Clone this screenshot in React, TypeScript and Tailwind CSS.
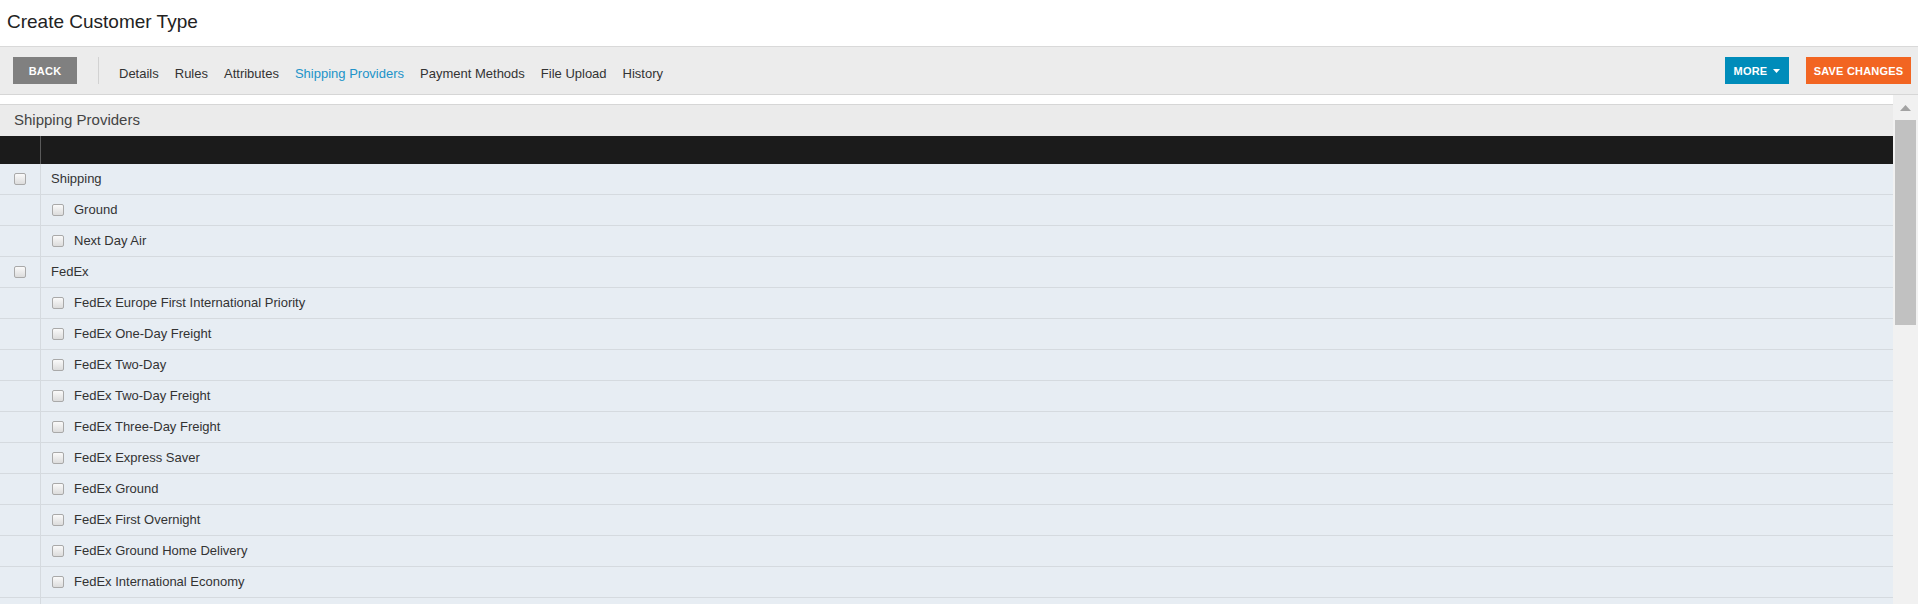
import { ReactNode } from 'react';

type Row = { label: string; child?: boolean };

const rows: Row[] = [
  { label: 'Shipping' },
  { label: 'Ground', child: true },
  { label: 'Next Day Air', child: true },
  { label: 'FedEx' },
  { label: 'FedEx Europe First International Priority', child: true },
  { label: 'FedEx One-Day Freight', child: true },
  { label: 'FedEx Two-Day', child: true },
  { label: 'FedEx Two-Day Freight', child: true },
  { label: 'FedEx Three-Day Freight', child: true },
  { label: 'FedEx Express Saver', child: true },
  { label: 'FedEx Ground', child: true },
  { label: 'FedEx First Overnight', child: true },
  { label: 'FedEx Ground Home Delivery', child: true },
  { label: 'FedEx International Economy', child: true },
];

const tabs = ['Details', 'Rules', 'Attributes', 'Shipping Providers', 'Payment Methods', 'File Upload', 'History'];

function Checkbox() {
  return (
    <span className="block w-[12px] h-[12px] rounded-[2px] border border-[#a9a9a9] bg-gradient-to-b from-[#fafafa] to-[#dcdcdc]" />
  );
}

function Btn({ children, className }: { children: ReactNode; className: string }) {
  return (
    <button
      className={`h-[27px] flex items-center justify-center pt-px text-[11px] font-bold text-white tracking-[0.2px] ${className}`}
    >
      {children}
    </button>
  );
}

export default function App() {
  return (
    <div className="h-[604px] w-full flex flex-col overflow-hidden bg-white text-[#333] font-['Liberation_Sans',Arial,sans-serif]">
      <div className="h-[47px] shrink-0 flex items-center pl-[7px] border-b border-[#d9d9d9]">
        <h1 className="text-[19px] text-[#222] -mt-px">Create Customer Type</h1>
      </div>

      <div className="h-[48px] shrink-0 flex items-center bg-[#ececec] border-b border-[#d6d6d6] pl-[13px] pr-[7px]">
        <Btn className="w-[64px] bg-[#808080]">BACK</Btn>
        <span className="w-px h-[27px] bg-[#d2d2d2] ml-[21px] mr-[20px]" />
        <nav className="flex items-center gap-[16px] text-[13px] mt-[6px]">
          {tabs.map((t) => (
            <span key={t} className={t === 'Shipping Providers' ? 'text-[#2193c9]' : 'text-[#333]'}>
              {t}
            </span>
          ))}
        </nav>
        <div className="ml-auto flex items-center gap-[17px]">
          <Btn className="w-[64px] bg-[#008cba] gap-[6px]">
            MORE
            <svg width="7" height="4" viewBox="0 0 7 4">
              <path d="M0 0h7L3.5 4z" fill="#fff" />
            </svg>
          </Btn>
          <Btn className="w-[105px] bg-[#f26522]">SAVE CHANGES</Btn>
        </div>
      </div>

      <div className="flex-1 flex min-h-0">
        <div className="flex-1 flex flex-col pt-[9px] min-w-0">
          <div className="border-t border-[#d6d6d6] bg-[#ebebeb] h-[32px] shrink-0 flex items-center pl-[14px] text-[15px] text-[#444]">
            Shipping Providers
          </div>
          <div className="h-[28px] shrink-0 flex bg-[#1b1b1b]">
            <div className="w-[41px] border-r border-[#5a5a5a]" />
          </div>
          <div className="flex-1 flex flex-col bg-[#e7edf3] overflow-hidden">
            {rows.map((r, i) => (
              <div key={i} className="h-[31px] shrink-0 flex border-b border-[#d5dadf] text-[13px] text-[#333]">
                <div className="w-[41px] shrink-0 border-r border-[#d5dadf] flex items-center justify-center">
                  {!r.child && <Checkbox />}
                </div>
                {r.child ? (
                  <div className="flex items-center pl-[11px] gap-[10px]">
                    <Checkbox />
                    <span>{r.label}</span>
                  </div>
                ) : (
                  <div className="flex items-center pl-[10px]">{r.label}</div>
                )}
              </div>
            ))}
            <div className="flex-1 flex">
              <div className="w-[41px] border-r border-[#d5dadf]" />
            </div>
          </div>
        </div>

        <div className="w-[25px] shrink-0 bg-[#f1f1f1] flex flex-col items-center px-[2px]">
          <svg width="11" height="6" viewBox="0 0 11 6" className="mt-[10px]">
            <path d="M5.5 0L11 6H0z" fill="#a3a3a3" />
          </svg>
          <div className="mt-[9px] w-full h-[205px] bg-[#c1c1c1]" />
        </div>
      </div>
    </div>
  );
}
